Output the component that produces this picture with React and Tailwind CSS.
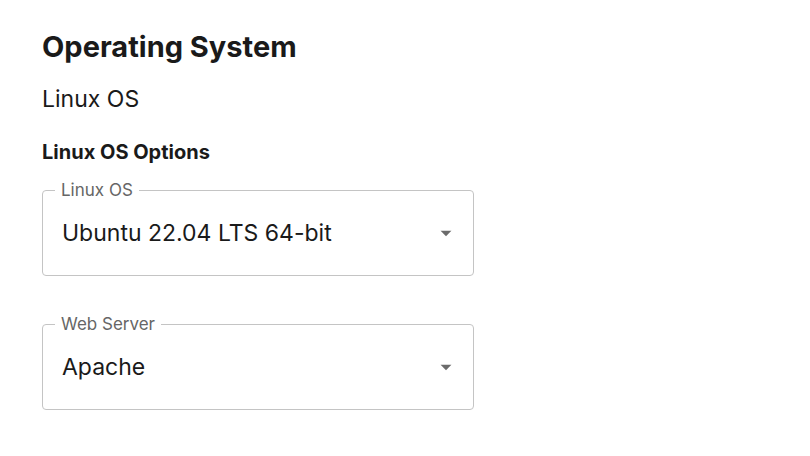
import React from 'react';

// --- Icon Components ---
const ArrowDropDown = () => (
    <svg viewBox="0 0 24 24" className="h-[26px] w-[26px]" fill="#6b6b6b" aria-hidden="true">
        <path d="M7 10l5 5 5-5z" />
    </svg>
);

const OutlinedSelect = ({ label, value }) => (
    <div className="relative w-[432px] h-[86px]">
        <fieldset className="absolute inset-x-0 bottom-0 top-[-9px] m-0 rounded border border-[#c4c4c4] px-[12px]">
            <legend className="px-[6px] text-[17px] leading-[18px] text-[#666666]">{label}</legend>
        </fieldset>
        <div className="relative flex h-full items-center justify-between pl-[20px] pr-[15px]">
            <span className="text-[23px] text-[#1a1a1a]">{value}</span>
            <ArrowDropDown />
        </div>
    </div>
);

const App = () => {
    return (
        <div className="min-h-screen bg-white px-[42px] pt-[29px] font-['Inter',sans-serif]">
            <h1 className="text-[29px] font-bold leading-[36px] text-[#1a1a1a]">Operating System</h1>
            <p className="mt-[20px] text-[23px] leading-[28px] text-[#1a1a1a]">Linux OS</p>
            <h2 className="mt-[27px] text-[20px] font-bold leading-[25px] text-[#1a1a1a]">Linux OS Options</h2>

            <div className="mt-[25px] flex flex-col gap-[48px]">
                <OutlinedSelect label="Linux OS" value="Ubuntu 22.04 LTS 64-bit" />
                <OutlinedSelect label="Web Server" value="Apache" />
            </div>
        </div>
    );
};

export default App;
